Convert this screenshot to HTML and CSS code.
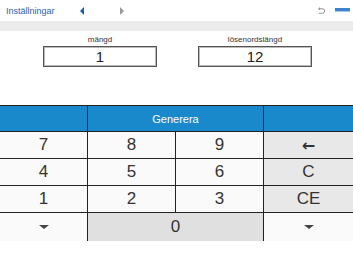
FILE: index.html
```html
<!DOCTYPE html>
<html lang="sv">
<head>
  <meta charset="UTF-8">
  <title>Lösenord</title>
  <link rel="stylesheet" href="styles.css">
</head>
<body>
  <!-- Top bar -->
  <div class="topbar">
    <a href="#" class="settings">Inställningar</a>
    <div class="nav">
      <span class="arrow arrow--left"></span>
      <span class="arrow arrow--right"></span>
    </div>
    <div class="tools">
      <svg class="undo" viewBox="0 0 10 8">
        <path d="M2 1.5 H6 A2.5 2.5 0 0 1 6 6.5 H2" />
        <path d="M3.3 0.2 L1.8 1.5 L3.3 2.8" />
      </svg>
      <span class="menu"></span>
    </div>
  </div>
  <div class="band"></div>

  <!-- Fields -->
  <div class="fields">
    <div class="field">
      <p class="field-label">mängd</p>
      <div class="field-box">1</div>
    </div>
    <div class="field">
      <p class="field-label">lösenordslängd</p>
      <div class="field-box">12</div>
    </div>
  </div>

  <!-- Keypad -->
  <div class="keypad">
    <div class="key key--blue"></div>
    <div class="key key--blue key--wide">Generera</div>
    <div class="key key--blue"></div>

    <div class="key">7</div>
    <div class="key">8</div>
    <div class="key">9</div>
    <div class="key key--gray key--arrow">&larr;</div>

    <div class="key">4</div>
    <div class="key">5</div>
    <div class="key">6</div>
    <div class="key key--gray">C</div>

    <div class="key">1</div>
    <div class="key">2</div>
    <div class="key">3</div>
    <div class="key key--gray">CE</div>

    <div class="key"><span class="caret"></span></div>
    <div class="key key--zero key--wide">0</div>
    <div class="key"><span class="caret"></span></div>
  </div>
</body>
</html>
```

FILE: styles.css
```css
*, *:before,
*:after {
  box-sizing: border-box;
}

body {
  margin: 0;
  width: 353px;
  height: 253px;
  background: #ffffff;
  font-family: 'Liberation Sans', Arial, sans-serif;
  color: #333;
  overflow: hidden;
}

.topbar {
  height: 21px;
  display: flex;
  align-items: center;
  padding: 0 3px 0 6px;
}

.settings {
  font-size: 9px;
  color: #2a64b4;
  text-decoration: none;
  width: 74px;
}

.nav {
  display: flex;
  align-items: center;
  gap: 36px;
}

.arrow {
  width: 0;
  height: 0;
  border-top: 4px solid transparent;
  border-bottom: 4px solid transparent;
}

.arrow--left {
  border-right: 4px solid #1a5cb0;
}

.arrow--right {
  border-left: 4px solid #999;
}

.tools {
  margin-left: auto;
  display: flex;
  align-items: center;
  gap: 9px;
}

.undo {
  width: 9px;
  height: 8px;
  fill: none;
  stroke: #777;
  stroke-width: 0.9;
}

.menu {
  display: block;
  width: 15px;
  height: 4px;
  background: #3c82d0;
  border-bottom: 1px solid #a8c8ea;
  margin-top: -2px;
}

.band {
  height: 10px;
  background: #ececec;
}

.fields {
  display: flex;
  gap: 41px;
  padding: 4px 0 0 43px;
  height: 74px;
}

.field {
  width: 114px;
}

.field-label {
  margin: 0 0 2px;
  font-size: 8px;
  text-align: center;
  color: #333;
  line-height: 9px;
}

.field-box {
  height: 21px;
  border: 1px solid #555;
  box-shadow: inset 0 0 0 1px #bbb;
  text-align: center;
  font-size: 15px;
  line-height: 19px;
  color: #222;
}

.keypad {
  display: grid;
  grid-template-columns: 88px 88px 88px 89px;
  grid-template-rows: 26px 27px 27px 27px 28px;
  border-top: 1px solid #222;
}

.key {
  display: flex;
  justify-content: center;
  align-items: center;
  font-size: 17px;
  color: #333;
  background: #fafafa;
  border-right: 1px solid #222;
  border-bottom: 1px solid #222;
}

.key:nth-child(4n + 3),
.key:last-child {
  border-right: 0;
}

.key--blue {
  background: #1a89cc;
  color: #ffffff;
  font-size: 11px;
}

.key--wide {
  grid-column: span 2;
}

.key--gray {
  background: #e8e8e8;
}

.key--arrow {
  font-family: 'DejaVu Sans', sans-serif;
  font-size: 16px;
  font-weight: bold;
}

.key--zero {
  background: #e0e0e0;
}

.keypad .key:nth-last-child(-n + 3) {
  border-bottom: 0;
}

.caret {
  width: 0;
  height: 0;
  border-left: 5px solid transparent;
  border-right: 5px solid transparent;
  border-top: 4px solid #444;
}
```
